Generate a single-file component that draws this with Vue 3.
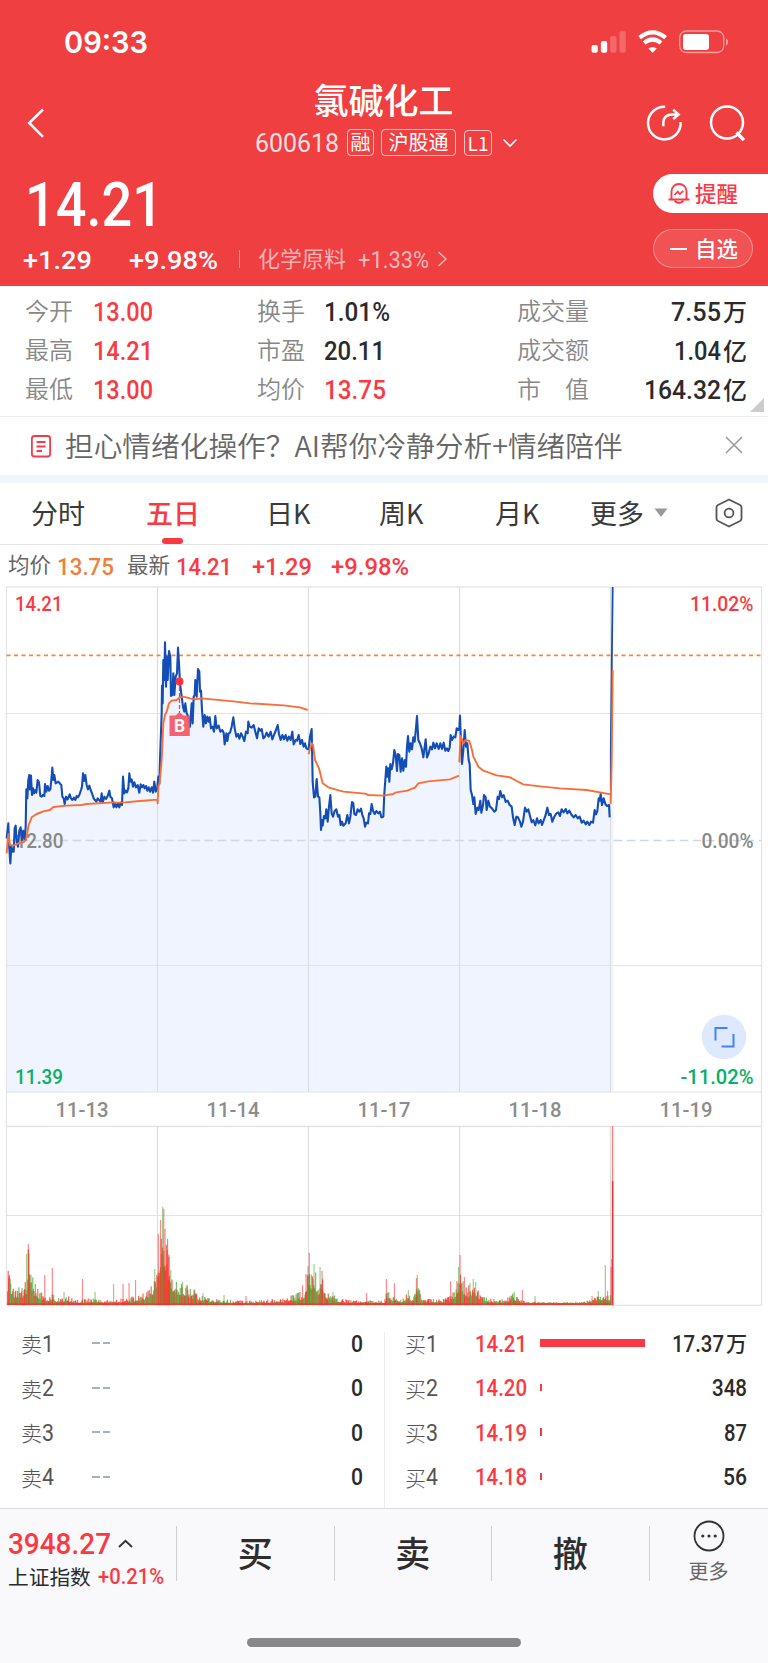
<script setup>
import { h } from 'vue'

// Numeric text fitted to an exact width, giving the narrow figures of a DIN-like face.
const Fit = ({ t, w, s, b = 500, f = 'Roboto' }) =>
  h('svg', { width: w, height: s, viewBox: `0 0 ${w} ${s}`, overflow: 'visible' }, [
    h('text', {
      x: 0,
      y: s * 0.856,
      textLength: w,
      lengthAdjust: 'spacingAndGlyphs',
      'font-size': s,
      'font-weight': b,
      'font-family': `${f}, "Noto Sans CJK SC", sans-serif`,
      fill: 'currentColor'
    }, t)
  ])
Fit.props = ['t', 'w', 's', 'b', 'f']

const stats = [
  [['今开', '13.00', 60, 'red'], ['换手', '1.01%', 66, ''], ['成交量', '7.55', 50, '', '万']],
  [['最高', '14.21', 60, 'red'], ['市盈', '20.11', 61, ''], ['成交额', '1.04', 47, '', '亿']],
  [['最低', '13.00', 60, 'red'], ['均价', '13.75', 62, 'red'], ['市　值', '164.32', 77, '', '亿']]
]
const tabs = ['分时', '五日', '日K', '周K', '月K']
const asks = ['1', '2', '3', '4']
const bids = [
  { n: '1', p: '14.21', bar: 105, q: '17.37', w: 52, u: '万' },
  { n: '2', p: '14.20', bar: 2, q: '348', w: 35 },
  { n: '3', p: '14.19', bar: 2, q: '87', w: 23 },
  { n: '4', p: '14.18', bar: 2, q: '56', w: 24 }
]

// Line data is kept in thirds of a pixel.
const toPx = (str, dx, dy) =>
  str.trim().split(/\s+/).map(p => {
    const [x, y] = p.split(',').map(Number)
    return `${(x / 3 + dx).toFixed(2)},${(y / 3 + dy).toFixed(2)}`
  }).join(' ')

const early = toPx(`20,775 25,730 27,790 31,850 34,800 37,815 41,815 44,745 47,737 50,785 54,800 58,752 62,742 66,780 70,752 74,780 77,740 79,628 82,655 85,600 88,585 90,628 93,587 96,645 99,625 102,640 106,630 109,638 113,600 117,607 121,648 125,650 129,645 133,648 135,612 139,635 143,618 147,632 151,628 154,600 157,563 160,600 163,585 167,610 175,605 181,612 184,615 187,650 191,655 194,672 198,650 203,658 209,643 213,655 217,660 222,653 226,660 230,648 234,652 238,645 243,630 246,620 249,580 252,603 256,585 260,615 264,628 268,617 272,630 276,640 281,655 285,660 289,665 293,655 297,660 302,665 305,640 308,668 313,650 318,657 323,648 328,632 331,650 336,655 341,682 345,668 349,682 354,670 358,682 362,668 366,675 369,590 373,640 377,632 381,637 385,625 388,580 391,605 395,598 399,620 403,607 408,622 413,615 418,638 422,613 426,622 430,615 434,625 438,618 442,632 446,622 450,635 455,622 459,638 463,605 467,635 471,630 475,590 478,612 480,540 485,400 486,317 488,370 490,240 493,300 495,187 498,320 500,230 503,300 507,213 511,230 513,348 517,345 520,280 523,345 527,290 531,280 534,203 537,250 540,310 545,350 549,380 553,395 556,370 560,400 565,410 570,440 575,370 578,430 581,350 584,345 586,300 590,350 594,267 598,275 600,335 603,332 606,390 610,440 614,405 618,430 622,410 626,425 629,412 633,445 638,440 642,455 646,408 650,445 656,437 661,455 667,450 671,458 674,493 679,460 682,483 686,460 690,458 695,440 700,412 704,445 709,470 714,462 718,476 723,460 728,470 733,483 738,455 743,460 745,425 749,440 755,443 761,435 766,455 771,475 776,445 781,452 785,447 790,475 795,470 800,458 806,470 812,455 817,478 823,462 828,450 833,435 837,462 842,480 847,465 852,478 857,465 862,482 867,470 872,480 877,455 881,493 887,480 891,482 896,465 901,492 906,480 911,500 915,490 919,505 925,508`, 0, 580)
const late = toPx(`26,205 30,170 35,147 38,305 42,352 46,350 50,297 54,350 58,352 61,400 63,450 66,420 68,437 72,408 76,415 79,388 83,425 87,380 91,345 95,400 99,410 104,393 109,388 114,410 118,405 122,435 126,425 130,437 137,430 142,405 147,430 151,410 156,366 160,370 163,402 168,405 173,388 178,395 183,386 187,405 191,415 195,440 199,428 204,430 207,400 211,402 215,372 219,392 224,402 229,393 235,400 240,395 244,412 250,410 253,340 256,300 259,260 262,290 265,265 268,305 271,252 275,268 279,250 283,210 287,225 291,273 294,222 298,225 302,275 306,235 310,272 314,240 318,260 321,200 324,168 328,215 332,190 336,208 340,172 344,185 347,155 351,108 355,180 360,190 365,205 370,232 374,200 377,178 381,232 386,220 391,200 396,208 400,188 405,205 410,190 416,207 421,190 426,207 431,188 436,212 441,205 445,213 449,203 452,165 456,180 461,170 466,172 470,145 475,150 478,145 480,107 483,190 486,252 490,210 494,150 498,200 502,190 506,240 509,252 512,330 516,345 520,372 523,352 527,402 532,383 536,390 541,362 544,398 549,375 552,345 557,352 560,390 565,362 570,380 576,385 583,395 588,390 593,350 597,357 601,333 606,352 611,345 617,366 623,362 629,375 635,380 639,412 644,435 649,410 654,412 660,425 664,440 669,425 675,383 680,395 685,388 690,408 695,427 700,420 706,436 711,415 716,430 722,420 726,435 732,418 737,405 742,383 747,405 752,402 757,425 763,410 769,400 775,397 780,408 785,388 791,397 797,387 802,400 808,392 815,405 821,412 827,405 833,415 839,410 845,428 851,422 857,433 862,425 868,435 873,425 879,428 884,390 888,403 892,393 896,355 899,362 902,342 906,375 911,355 916,372 921,378 927,375 929,412`, 300, 680)
const price = `${early} ${late}`
const area = `6.7,1092 ${price} 613.5,800 613.5,1092`

const averages = [
  toPx('20,820 25,762 30,795 40,797 55,790 68,788 78,780 86,735 95,712 110,702 130,694 150,690 160,681 200,677 245,675 260,672 330,668 375,667 420,663 472,659 473,670 475,620 479,608 485,540 490,430 495,405 500,395 507,370 515,362 530,360 540,352 550,350 570,355 585,358 605,355 700,364 750,370 850,376 900,382 923,390', 0, 580),
  toPx('26,223 30,205 36,190 39,195 45,240 57,265 68,310 85,322 130,335 195,341 205,345 250,347 280,342 285,338 322,332 345,323 355,310 385,304 450,298 477,287', 300, 680),
  toPx('478,247 482,168 490,190 497,180 508,183 516,210 520,230 535,260 550,272 590,286 630,292 650,303 670,313 720,319 780,325 860,330 932,343 932,370 935,250 938,-30', 300, 680)
]

// Volume: an envelope of usual heights, plus the individual peaks.
const envelope = [
  [7, 30], [11, 24], [14, 16], [23, 16], [26, 24], [28, 55], [30, 38], [33, 20], [40, 12], [48, 7], [52, 12], [56, 6],
  [62, 6], [66, 8], [72, 6], [78, 4], [90, 6], [100, 4], [112, 5], [118, 5], [126, 6], [136, 8], [144, 11], [150, 15],
  [155, 28], [158, 62], [161, 78], [163, 92], [165, 72], [168, 52], [172, 30], [176, 22], [182, 18], [190, 15], [197, 10],
  [210, 6], [220, 5], [240, 4], [256, 4], [270, 5], [284, 6], [293, 9], [300, 11], [304, 15], [308, 42], [311, 30],
  [314, 35], [317, 18], [322, 36], [324, 14], [330, 12], [335, 7], [350, 4], [366, 4], [384, 4], [386, 13], [394, 7],
  [402, 5], [408, 12], [411, 6], [415, 14], [417, 25], [420, 7], [430, 5], [440, 5], [448, 7], [454, 14], [458, 30],
  [462, 21], [466, 16], [472, 20], [476, 14], [481, 10], [486, 7], [492, 5], [505, 5], [512, 11], [517, 7], [525, 3],
  [545, 2.6], [575, 2.6], [590, 4], [596, 7], [600, 9], [607, 9], [610, 10]
]
const peaks = [
  [26.5, 51, 'g'], [28.3, 61, 'r'], [44.7, 30, 'r'], [52.3, 37, 'r'], [64, 13, 'g'], [82.4, 26, 'r'], [95, 13, 'g'],
  [113.5, 21, 'g'], [123, 21, 'r'], [129, 22, 'r'], [135.5, 25, 'r'], [154.7, 36, 'g'], [158.3, 71, 'r'],
  [160.5, 85, 'r'], [162.6, 98, 'g'], [163.7, 96, 'r'], [165, 76, 'r'], [167.2, 55, 'r'], [168.8, 48, 'r'],
  [170.7, 35, 'g'], [182.5, 23, 'g'], [187, 20, 'g'], [194.7, 16, 'g'], [203, 12, 'g'], [224, 10, 'g'], [246, 9, 'r'],
  [302.5, 20, 'r'], [306, 31, 'r'], [308, 39, 'g'], [309.2, 52, 'r'], [314, 41, 'g'], [320, 38, 'g'], [322, 34, 'r'],
  [333, 13, 'g'], [366.6, 12, 'r'], [386.3, 26, 'r'], [394.4, 22, 'r'], [408.3, 15, 'g'], [416.4, 27, 'r'],
  [417.3, 30, 'g'], [450.6, 24, 'r'], [456.8, 24, 'r'], [458.5, 38, 'g'], [460, 50, 'r'], [464.4, 28, 'r'],
  [470, 22, 'g'], [473.2, 26, 'g'], [475.7, 23, 'g'], [510, 9, 'r'], [514.3, 13, 'g'], [522.3, 15, 'r'],
  [535, 9, 'g'], [592, 9, 'r'], [598.3, 14, 'g'], [605.3, 40, 'g'], [607.5, 14, 'r'], [611, 38, 'r'], [611.8, 46, 'r']
]
let seed = 41
const rnd = () => (seed = (seed * 16807) % 2147483647) / 2147483647
const usual = x => {
  const i = Math.max(1, envelope.findIndex(e => e[0] >= x))
  const [x0, y0] = envelope[i - 1]
  const [x1, y1] = envelope[i]
  return y0 + ((y1 - y0) * (x - x0)) / (x1 - x0)
}
const bars = []
for (let x = 7; x < 610; x += 0.63) {
  const r = rnd()
  bars.push({ x, h: Math.max(2, usual(x) * (0.45 + 0.75 * r * r)), c: rnd() > 0.46 ? 'r' : 'g' })
}

const cols = [157.5, 308.5, 459.5, 610.5]
const dates = ['11-13', '11-14', '11-17', '11-18', '11-19']
</script>

<template>
  <div class="page">
    <header class="head">
      <div class="status">
        <Fit t="09:33" :w="84" :s="30" :b="600" f="Inter" />
        <svg width="140" height="30" viewBox="590 27 140 30">
          <g fill="#fff">
            <rect x="591.5" y="45" width="6.3" height="7.8" rx="2" />
            <rect x="600.9" y="41" width="6.3" height="11.8" rx="2" />
            <rect x="610.2" y="36" width="6.3" height="16.8" rx="2" opacity=".22" />
            <rect x="619.5" y="31" width="6.3" height="21.8" rx="2" opacity=".22" />
            <rect x="683" y="34" width="26" height="16" rx="3" />
            <path d="M726 38.300q2.200 1.300 2.200 3.700t-2.200 3.700z" opacity=".5" />
            <path d="M652.600 52.800l-4.200-4.200q4.200-3.400 8.400 0z" />
          </g>
          <rect x="679.700" y="31" width="44" height="21.500" rx="6.500" fill="none" stroke="#fff" stroke-opacity=".5" stroke-width="1.300" />
          <path d="M639.600 37.600q13-10.600 26 0M644.200 43q8.400-7 16.800 0" fill="none" stroke="#fff" stroke-width="4.200" />
        </svg>
      </div>

      <nav class="nav">
        <svg class="back" width="18" height="32" viewBox="27 107 18 32">
          <path d="M43 109.500L29.200 123l13.800 13.800" fill="none" stroke="#fff" stroke-width="2.500" />
        </svg>
        <div class="name">
          <h1>氯碱化工</h1>
          <div class="code">
            <Fit t="600618" :w="84" :s="26" :b="400" />
            <span class="tag t1">融</span>
            <span class="tag t2">沪股通</span>
            <span class="tag t3">L1</span>
            <svg width="16" height="10" viewBox="0 0 16 10"><path d="M1.500 1.500L8 8l6.500-6.500" fill="none" stroke="#fff" stroke-width="1.600" /></svg>
          </div>
        </div>
        <svg class="tools" width="102" height="38" viewBox="645 104 102 38">
          <g fill="none" stroke="#fff" stroke-width="2.500">
            <path d="M665.200 106.800A16.300 16.300 0 1 0 680.600 122" />
            <path d="M663.300 126.200v-3.500q.5-8.200 9-8.200h5.500M673.200 109.800l5.400 4.600-5.400 4.600" />
            <circle cx="727" cy="122.500" r="16" />
            <path d="M736.500 132.500l7.400 7.600" stroke-width="3.500" />
          </g>
        </svg>
      </nav>

      <div class="quote">
        <div>
          <div class="last"><Fit t="14.21" :w="138" :s="60.500" :b="500" /></div>
          <div class="change">
            <Fit t="+1.29" :w="69" :s="26.500" />
            <Fit class="pct" t="+9.98%" :w="89" :s="26.500" />
            <i />
            <span>化学原料</span>
            <Fit class="dim" t="+1.33%" :w="71" :s="23" :b="400" />
            <svg class="dim2" width="11" height="18" viewBox="0 0 11 18"><path d="M1.500 2l7.500 7-7.500 7" fill="none" stroke="#fff" stroke-width="1.500" /></svg>
          </div>
        </div>
        <div class="pills">
          <div class="pill alert">
            <svg width="22" height="23" viewBox="668 182 22 23">
              <g fill="none" stroke="#f93b48" stroke-width="1.900">
                <path d="M671.500 199.300v-7.800a7.500 7.500 0 0 1 15 0v7.800M668.500 199.500h21" />
                <path d="M674.500 200.500q4.500 5 9 0" />
                <path d="M674.500 195l3.300-3.400 2 2.700 3.500-3.500" stroke-width="1.700" />
              </g>
            </svg>
            <span>提醒</span>
          </div>
          <div class="pill own"><b /><span>自选</span></div>
        </div>
      </div>
    </header>

    <section class="stats">
      <div v-for="(row, i) in stats" :key="i" class="srow">
        <template v-for="s in row" :key="s[0]">
          <span class="lab">{{ s[0] }}</span>
          <span class="val" :class="[s[3], { end: s[4] }]"><Fit :t="s[1]" :w="s[2]" :s="26" /><span v-if="s[4]" class="unit">{{ s[4] }}</span></span>
        </template>
      </div>
      <svg class="corner" width="14" height="14"><path d="M14 0v14H0z" fill="#ccc" /></svg>
    </section>

    <section class="tip">
      <svg width="22" height="24" viewBox="30 433 22 24">
        <g fill="none" stroke="#f93b48" stroke-width="1.800">
          <rect x="31.900" y="435" width="18.200" height="20.500" rx="2.500" />
          <path d="M36.500 441h9M36.500 445.500h9M36.500 450h5.500" />
        </g>
      </svg>
      <span>担心情绪化操作？<em>AI</em>帮你冷静分析+情绪陪伴</span>
      <svg class="close" width="18" height="18" viewBox="0 0 18 18"><path d="M1 1l16 16M17 1L1 17" stroke="#999" stroke-width="1.500" /></svg>
    </section>

    <nav class="tabs">
      <span v-for="t in tabs" :key="t" :class="{ on: t === '五日' }">{{ t }}</span>
      <span class="more">更多<svg width="14" height="9"><path d="M.5 .5h13L7 9z" fill="#999" /></svg></span>
      <svg class="gear" width="28" height="30" viewBox="0 0 28 30">
        <path d="M14 1.500L25 7q1.500.8 1.500 2.300v11.400q0 1.500-1.500 2.300L14 28.500 3 23q-1.500-.8-1.500-2.300V9.300Q1.500 7.800 3 7z" fill="none" stroke="#555" stroke-width="1.800" stroke-linejoin="round" />
        <circle cx="14" cy="15" r="4.400" fill="none" stroke="#555" stroke-width="1.800" />
      </svg>
    </nav>

    <div class="legend">
      <span>均价</span><Fit class="org" t="13.75" :w="57" :s="24" />
      <span class="gap">最新</span><Fit class="red" t="14.21" :w="56" :s="24" />
      <Fit class="red g2" t="+1.29" :w="60" :s="24" />
      <Fit class="red g3" t="+9.98%" :w="78" :s="24" />
    </div>

    <svg class="chart" width="768" height="722" viewBox="0 586 768 722" font-family="Roboto, sans-serif" font-weight="500">
      <polygon :points="area" fill="#eff4fe" />
      <g stroke="#e3e3e3" stroke-width="1.200" fill="none">
        <rect x="6.500" y="587" width="755" height="718.300" />
        <path d="M6.500 713.500h755M6.500 965.500h755M6.500 1092h755M6.500 1126.300h755M6.500 1215.500h755" />
        <path v-for="c in cols" :key="c" :d="`M${c} 587V1092M${c} 1126V1305`" stroke="#dedede" />
      </g>
      <path d="M6.500 840.500h755" stroke="#cdd8e3" stroke-width="1.300" stroke-dasharray="8.500 4.700" />
      <g font-size="20.500" fill="#888">
        <text x="15.500" y="847.500" textLength="48" lengthAdjust="spacingAndGlyphs">12.80</text>
        <text x="701.500" y="847.500" textLength="52" lengthAdjust="spacingAndGlyphs">0.00%</text>
      </g>
      <path d="M6.500 655.300h754" stroke="#fa8732" stroke-width="1.800" stroke-dasharray="4 3.500" />
      <path d="M612 1092V700" stroke="#eff4fe" stroke-width="2" opacity=".5" />
      <polyline :points="price" fill="none" stroke="#134db5" stroke-width="2.100" stroke-linejoin="round" />
      <path d="M610.800 790V750L612.700 587" fill="none" stroke="#134db5" stroke-width="1.800" />
      <polyline v-for="a in averages" :key="a" :points="a" fill="none" stroke="#fb6d37" stroke-width="1.900" stroke-linejoin="round" />

      <path d="M179.500 681V713" stroke="#f93b48" stroke-width="1.200" stroke-dasharray="4 2" />
      <circle cx="179.500" cy="681.500" r="4" fill="#f93340" />
      <path d="M169.500 715.500h6l4-3.500 4 3.500h6.300v20.500h-20.300z" fill="#f75565" opacity=".93" />
      <text x="179.600" y="732.300" text-anchor="middle" font-size="17.500" font-weight="700" fill="#fff">B</text>

      <g font-size="20.500">
        <text x="15" y="610.700" textLength="47.500" lengthAdjust="spacingAndGlyphs" fill="#f93a43">14.21</text>
        <text x="690" y="610.700" textLength="63.500" lengthAdjust="spacingAndGlyphs" fill="#f93a43">11.02%</text>
        <text x="15" y="1083.700" textLength="48" lengthAdjust="spacingAndGlyphs" fill="#0aae64">11.39</text>
        <text x="680.500" y="1083.700" textLength="73" lengthAdjust="spacingAndGlyphs" fill="#0aae64">-11.02%</text>
        <text v-for="(d, i) in dates" :key="d" :x="55.500 + i * 151" y="1117" textLength="53" lengthAdjust="spacingAndGlyphs" fill="#8c8c8c">{{ d }}</text>
      </g>

      <circle cx="724" cy="1037" r="22.200" fill="#dee9fd" />
      <path d="M727.500 1028h-12v12.500M721.500 1046.500h12V1034" fill="none" stroke="#3d85ff" stroke-width="2" />

      <g v-for="(b, i) in bars" :key="i" :class="b.c">
        <rect :x="b.x" :y="1305 - b.h" width="1.150" :height="b.h" opacity=".75" />
      </g>
      <g v-for="p in peaks" :key="p[0]" :class="p[2]">
        <rect :x="p[0] - .55" :y="1305 - p[1]" width="1.200" :height="p[1]" opacity=".55" />
      </g>
      <rect x="7" y="1303.300" width="604" height="1.700" class="r" opacity=".7" />
      <rect x="611.900" y="1126" width="1.300" height="179" class="r" opacity=".6" />
      <rect x="611.900" y="1181" width="1.500" height="124" class="r" opacity=".9" />
    </svg>

    <section class="book">
      <div class="side left">
        <div v-for="a in asks" :key="a" class="line">
          <span class="pos">卖<Fit :t="a" :w="12" :s="23.500" :b="400" /></span>
          <span class="dash"><i /><i /></span>
          <span class="qty"><Fit t="0" :w="12" :s="23.500" /></span>
        </div>
      </div>
      <div class="side">
        <div v-for="b in bids" :key="b.n" class="line">
          <span class="pos">买<Fit :t="b.n" :w="12" :s="23.500" :b="400" /></span>
          <Fit class="red" :t="b.p" :w="52" :s="23.500" />
          <i class="bar" :style="{ width: b.bar + 'px' }" />
          <span class="qty"><Fit :t="b.q" :w="b.w" :s="23.500" /><span v-if="b.u" class="unit">{{ b.u }}</span></span>
        </div>
      </div>
    </section>

    <footer class="foot">
      <div class="index">
        <div class="ix"><Fit class="red" t="3948.27" :w="103" :s="29" />
          <svg width="15" height="9" viewBox="0 0 15 9"><path d="M1 8l6.500-6.300L14 8" fill="none" stroke="#333" stroke-width="1.900" /></svg>
        </div>
        <div class="iy"><span>上证指数</span><Fit class="red" t="+0.21%" :w="66" :s="21.500" /></div>
      </div>
      <span class="act">买</span>
      <span class="act">卖</span>
      <span class="act">撤</span>
      <div class="etc">
        <svg width="32" height="32" viewBox="0 0 32 32">
          <circle cx="16" cy="16" r="14.500" fill="none" stroke="#333" stroke-width="1.800" />
          <g fill="#333"><circle cx="9.800" cy="16" r="1.600" /><circle cx="16" cy="16" r="1.600" /><circle cx="22.200" cy="16" r="1.600" /></g>
        </svg>
        <span>更多</span>
      </div>
    </footer>
    <div class="home"><i /></div>
  </div>
</template>

<style>
body { margin: 0; background: #fff; }
</style>

<style scoped>
.page { width: 768px; height: 1663px; overflow: hidden; background: #fff; color: #2b2b2b; font-family: "Noto Sans CJK SC", sans-serif; display: flex; flex-direction: column; }
.page > * { flex-shrink: 0; box-sizing: border-box; }
svg { display: block; flex-shrink: 0; }
span, h1 { white-space: nowrap; }
.red { color: #f93a43; }
.org { color: #f07f3c; }

.head { height: 286px; background: #f03f41; color: #fff; }
.status { height: 84px; display: flex; align-items: center; justify-content: space-between; padding: 0 38px 0 64px; }
.nav { height: 82px; display: flex; align-items: flex-start; }
.back { margin: 23px 0 0 27px; width: 18px; }
.name { margin-left: 210px; width: 264px; }
h1 { margin: 0 0 0 -7px; height: 35px; line-height: 30px; font-size: 35px; font-weight: 500; text-align: center; }
.code { height: 47px; display: flex; align-items: center; color: rgba(255,255,255,.85); }
.tag { flex-shrink: 0; box-sizing: border-box; border: 1.300px solid rgba(255,255,255,.7); border-radius: 4px; font-size: 20px; height: 27px; line-height: 23px; text-align: center; color: #fff; }
.t1 { width: 27px; margin-left: 8px; }
.t2 { width: 75px; margin-left: 7px; }
.t3 { width: 28px; margin-left: 8px; font-size: 19px; height: 26px; }
.code > svg:last-child { margin-left: 10px; }
.tools { margin: 20px 0 0 126px; }
.quote { display: flex; justify-content: space-between; }
.last { height: 76px; display: flex; align-items: center; padding-left: 25px; }
.change { height: 34px; display: flex; align-items: center; padding-left: 23px; }
.pct { margin-left: 37px; }
.change i { width: 1px; height: 18px; background: rgba(255,255,255,.45); margin-left: 21px; }
.change span { font-size: 22px; color: rgba(255,255,255,.6); margin-left: 18px; line-height: 30px; margin-top: -5px; }
.dim { color: rgba(255,255,255,.65); margin-left: 12px; }
.dim2 { margin-left: 8px; opacity: .65; }
.pills { padding-top: 8px; width: 115px; display: flex; flex-direction: column; gap: 16px; }
.pill { height: 39px; box-sizing: border-box; display: flex; align-items: center; font-size: 21.500px; font-weight: 500; line-height: 30px; }
.pill span { margin-top: -2px; }
.alert { background: #fff; color: #f93b48; border-radius: 20px 0 0 20px; padding-left: 15px; }
.alert span { margin-left: 5px; }
.own { width: 100px; border: 1px solid rgba(255,255,255,.35); background: rgba(255,255,255,.1); border-radius: 20px; padding-left: 16px; }
.own b { width: 17px; height: 2px; background: #fff; }
.own span { margin-left: 8px; }

.stats { height: 131px; padding-top: 6px; border-bottom: 1px solid #ececec; position: relative; }
.srow { height: 39px; display: grid; grid-template-columns: 68px 164px 67px 193px 101px 1fr; align-items: center; padding: 0 21px 0 25px; font-size: 24px; line-height: 32px; }
.lab { color: #888; font-weight: 350; margin-top: -3px; }
.val { display: flex; align-items: center; font-weight: 500; line-height: 30px; padding-top: 1px; }
.end { justify-content: flex-end; }
.unit { margin: -3px 0 0 2px; }
.corner { position: absolute; right: 4px; bottom: 4px; }

.tip { height: 66px; display: flex; align-items: center; border-bottom: 8px solid #f2f5fa; padding: 0 25px 0 30px; color: #666; }
.tip span { font-size: 28.700px; line-height: 40px; margin-left: 13px; font-weight: 350; margin-top: -2px; }
.tip em { font-style: normal; }
.close { margin-left: auto; margin-top: -2px; }

.tabs { height: 62px; display: grid; grid-template-columns: 115px 120px 113px 116px 95px 79px 1fr; align-items: center; border-bottom: 1px solid #e4e4e4; padding: 0 25px 0 31px; font-size: 27px; line-height: 59px; color: #3a3a3a; }
.tabs span { height: 61px; }
.on { color: #f93a43; font-weight: 500; position: relative; }
.on::after { content: ""; position: absolute; left: 16px; bottom: 0; width: 21px; height: 6px; border-radius: 3px; background: #f93a43; }
.tabs .more { display: flex; align-items: center; height: 59px; align-self: start; }
.more svg { margin-left: 10px; }
.gear { justify-self: end; margin-top: -1px; }

.legend { height: 41px; display: flex; align-items: center; padding-left: 8px; font-size: 21.500px; color: #666; }
.legend span { line-height: 30px; margin-top: -3px; }
.legend svg { margin-left: 6px; }
.legend .gap { margin-left: 13px; }
.legend .g2 { margin-left: 20px; }
.legend .g3 { margin-left: 19px; }

.r { fill: #ff2626; }
.g { fill: #4aa52e; }

.book { height: 200px; padding-top: 24px; display: flex; }
.side { width: 384px; box-sizing: border-box; padding: 0 22px 0 21px; margin-top: -11px; }
.left { position: relative; }
.left::after { content: ""; position: absolute; right: -1px; top: 11px; bottom: 0; width: 1px; background: #ececec; }
.line { height: 44.500px; display: flex; align-items: center; }
.pos { width: 70px; display: flex; align-items: center; font-size: 21px; font-weight: 300; color: #555; line-height: 28px; }
.dash { display: flex; gap: 3px; margin-left: 1px; }
.dash i { width: 7.500px; height: 2px; background: #a9b1be; }
.bar { height: 7.500px; background: #f93a43; margin: -1px 0 0 13px; }
.qty { margin-left: auto; display: flex; align-items: center; font-size: 21px; font-weight: 500; line-height: 28px; }
.side .qty { margin-right: -1px; }

.foot { height: 115px; border-top: 1px solid #dcdcde; background: #f9f9fc; display: flex; }
.index { width: 176px; }
.ix { height: 30px; margin-top: 19px; display: flex; align-items: center; padding-left: 8px; }
.ix svg + svg { margin-left: 7px; }
.iy { height: 30px; margin-top: 4px; display: flex; align-items: center; padding-left: 8px; font-size: 20.700px; }
.iy span { line-height: 28px; margin-top: -3px; }
.iy svg { margin-left: 7px; }
.act, .etc { width: 157.500px; height: 55px; margin-top: 17px; box-sizing: border-box; border-left: 1px solid #cfcfd2; }
.act { font-size: 35px; font-weight: 500; line-height: 52px; text-align: center; color: #2e2e2e; }
.etc { width: 119px; display: flex; flex-direction: column; align-items: center; font-size: 20px; color: #666; }
.etc svg { margin-top: -6px; }
.etc span { line-height: 26px; margin-top: 6px; }
.home { height: 40px; flex-grow: 1; background: #f9f9fc; display: flex; justify-content: center; }
.home i { width: 274px; height: 9px; border-radius: 5px; background: #88888a; margin-top: 15px; }
</style>
